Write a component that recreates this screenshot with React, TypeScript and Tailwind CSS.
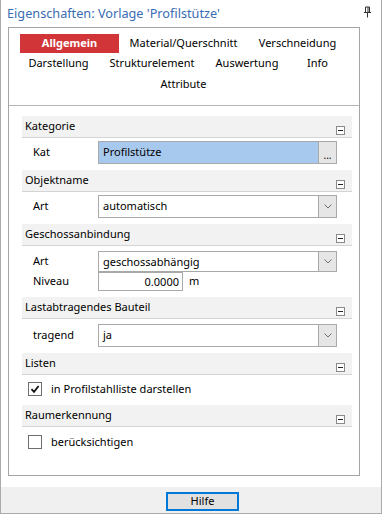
import React from "react";

const font = "font-['Noto_Sans','Liberation_Sans',sans-serif]";

function Collapse() {
  return (
    <div className="w-[9px] h-[9px] border border-[#8a8a8a] bg-white flex items-center justify-center">
      <div className="w-[5px] h-px bg-[#222]" />
    </div>
  );
}

function Header({ title, mt }: { title: string; mt: string }) {
  return (
    <div className={`${mt} h-[22px] bg-[#f2f2f2] border-b border-[#d4d4d4] flex justify-between`}>
      <span className="pl-[3px] leading-[20px] text-[11px] text-black">{title}</span>
      <div className="flex items-end pb-[2px] pr-[7px]">
        <Collapse />
      </div>
    </div>
  );
}

function Chevron() {
  return (
    <svg width="8" height="5" viewBox="0 0 8 5">
      <path d="M0.5 0.5 L4 4 L7.5 0.5" fill="none" stroke="#707070" strokeWidth="1" />
    </svg>
  );
}

function Row({ label, mt, children }: { label: string; mt: string; children: React.ReactNode }) {
  return (
    <div className={`${mt} flex items-center`}>
      <span className="w-[76px] pl-[11px] text-[11px] text-black">{label}</span>
      {children}
    </div>
  );
}

function Select({ value, h = "h-[23px]" }: { value: string; h?: string }) {
  return (
    <div className={`w-[239px] ${h} border border-[#a9a9a9] bg-white flex`}>
      <span className="flex-1 pl-[4px] text-[11px] leading-[19px] text-black">{value}</span>
      <div className="w-[18px] h-full border-l border-[#a9a9a9] bg-[#e6e6e6] flex items-center justify-center">
        <Chevron />
      </div>
    </div>
  );
}

function Check({ checked }: { checked: boolean }) {
  return (
    <div className="w-[14px] h-[14px] border border-[#6e6e6e] bg-white flex items-center justify-center">
      {checked && (
        <svg width="10" height="10" viewBox="0 0 10 10">
          <path d="M1.5 5.2 L4 7.8 L8.6 2" fill="none" stroke="#111" strokeWidth="1.8" />
        </svg>
      )}
    </div>
  );
}

export default function App() {
  return (
    <div className={`w-[383px] h-[515px] bg-white ${font}`}>
      <div className="w-[382px] h-[514px] border-l border-r border-b border-[#ababab] flex flex-col">
        {/* title */}
        <div className="h-[27px] flex items-center justify-between pl-[6px] pr-[9px]">
          <span className="text-[12.7px] text-[#3a6db3] leading-[20px] -mt-[1px]">Eigenschaften: Vorlage 'Profilstütze'</span>
          <svg width="9" height="12" viewBox="0 0 9 12" className="-mt-[3px]">
            <path d="M1 6.5 H8" stroke="#333" strokeWidth="1" />
            <path d="M2.5 1 H6.5 V6 M2.5 1 V6 M5 1 V6" stroke="#333" strokeWidth="1" fill="none" />
            <path d="M4.5 7 V11.5" stroke="#333" strokeWidth="1" />
          </svg>
        </div>

        {/* panel */}
        <div className="ml-[7px] w-[352px] h-[449px] border border-[#a5a5a5] bg-white flex flex-col">
          {/* tabs */}
          <div className="h-[78px] border-b border-[#b5b5b5] pt-[6px] pl-[11px] text-[11px] text-black">
            <div className="flex h-[19px] items-center">
              <div className="w-[99px] h-[19px] bg-[#d13538] text-white font-bold flex items-center justify-center">Allgemein</div>
              <div className="w-[129px] text-center">Material/Querschnitt</div>
              <div className="w-[99px] text-center">Verschneidung</div>
            </div>
            <div className="flex h-[21px] items-center">
              <div className="w-[77px] text-center">Darstellung</div>
              <div className="w-[110px] text-center">Strukturelement</div>
              <div className="w-[80px] text-center">Auswertung</div>
              <div className="w-[61px] text-center">Info</div>
            </div>
            <div className="flex h-[21px] items-center">
              <div className="ml-[140px] w-[47px] text-center">Attribute</div>
            </div>
          </div>

          {/* properties */}
          <div className="pl-[13px] pr-[7px] pt-[10px] flex flex-col">
            <Header title="Kategorie" mt="mt-0" />
            <Row label="Kat" mt="mt-[3px]">
              <div className="w-[239px] h-[23px] border border-[#a9a9a9] bg-[#a8c9ee] flex">
                <span className="flex-1 pl-[4px] text-[11px] leading-[19px] text-black">Profilstütze</span>
                <div className="w-[18px] h-full border-l border-[#a9a9a9] bg-[#e6e6e6] flex items-end justify-center text-[10px] leading-[16px] text-black">
                  ...
                </div>
              </div>
            </Row>

            <Header title="Objektname" mt="mt-[6px]" />
            <Row label="Art" mt="mt-[3px]">
              <Select value="automatisch" />
            </Row>

            <Header title="Geschossanbindung" mt="mt-[6px]" />
            <Row label="Art" mt="mt-[5px]">
              <Select value="geschossabhängig" h="h-[21px]" />
            </Row>
            <Row label="Niveau" mt="mt-0">
              <div className="w-[85px] h-[19px] border border-[#a9a9a9] bg-white text-right pr-[3px] text-[11px] leading-[17px] text-black">0.0000</div>
              <span className="ml-[6px] text-[11px] text-black">m</span>
            </Row>

            <Header title="Lastabtragendes Bauteil" mt="mt-[6px]" />
            <Row label="tragend" mt="mt-[5px]">
              <Select value="ja" />
            </Row>

            <Header title="Listen" mt="mt-[6px]" />
            <div className="mt-[7px] flex items-center pl-[6px] h-[14px]">
              <Check checked />
              <span className="ml-[9px] text-[11px] text-black">in Profilstahlliste darstellen</span>
            </div>

            <Header title="Raumerkennung" mt="mt-[9px]" />
            <div className="mt-[8px] flex items-center pl-[6px] h-[14px]">
              <Check checked={false} />
              <span className="ml-[9px] text-[11px] text-black">berücksichtigen</span>
            </div>
          </div>
        </div>

        <div className="h-[11px]" />
        <div className="flex-1 bg-[#f0f0f0] pt-[5px] pl-[165px]">
          <div className="w-[73px] h-[19px] border-2 border-[#0078d7] bg-[#e1e1e1] flex items-center justify-center text-[11px] text-black">
            Hilfe
          </div>
        </div>
      </div>
    </div>
  );
}
